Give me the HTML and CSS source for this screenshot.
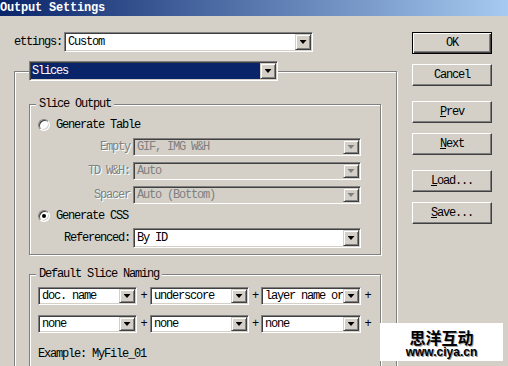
FILE: index.html
```html
<!DOCTYPE html>
<html lang="en">
  <head>
    <meta charset="UTF-8" />
    <title>Output Settings</title>
    <link rel="stylesheet" href="styles.css">
  </head>
  <body>
    <div class="titlebar">Output Settings</div>

    <div class="dialog">
      <div class="main">
        <!-- Settings preset -->
        <div class="settings-row">
          <span class="label">ettings:</span>
          <div class="combo combo-settings">
            <span class="value">Custom</span>
            <span class="drop"><i class="arrow"></i></span>
          </div>
        </div>

        <!-- Page panel, the combo works as its legend -->
        <fieldset class="panel">
          <legend>
            <div class="combo combo-slices">
              <span class="value selected">Slices</span>
              <span class="drop"><i class="arrow"></i></span>
            </div>
          </legend>

          <fieldset class="group group-output">
            <legend>Slice Output</legend>
            <div class="radio-row first"><span class="radio"></span>Generate Table</div>

            <div class="field-row first">
              <span class="field-label disabled">Empty</span>
              <div class="combo combo-wide disabled">
                <span class="value">GIF, IMG W&amp;H</span>
                <span class="drop"><i class="arrow"></i></span>
              </div>
            </div>
            <div class="field-row">
              <span class="field-label disabled">TD W&amp;H:</span>
              <div class="combo combo-wide disabled">
                <span class="value">Auto</span>
                <span class="drop"><i class="arrow"></i></span>
              </div>
            </div>
            <div class="field-row">
              <span class="field-label disabled">Spacer</span>
              <div class="combo combo-wide disabled">
                <span class="value">Auto (Bottom)</span>
                <span class="drop"><i class="arrow"></i></span>
              </div>
            </div>

            <div class="radio-row"><span class="radio checked"></span>Generate CSS</div>

            <div class="field-row ref">
              <span class="field-label">Referenced:</span>
              <div class="combo combo-wide combo-tall">
                <span class="value">By ID</span>
                <span class="drop"><i class="arrow"></i></span>
              </div>
            </div>
          </fieldset>

          <fieldset class="group group-naming">
            <legend>Default Slice Naming</legend>
            <div class="naming-row first">
              <div class="combo name-a"><span class="value">doc. name</span><span class="drop"><i class="arrow"></i></span></div>
              <span class="plus">+</span>
              <div class="combo name-b"><span class="value">underscore</span><span class="drop"><i class="arrow"></i></span></div>
              <span class="plus plus-b">+</span>
              <div class="combo name-c"><span class="value">layer name or</span><span class="drop"><i class="arrow"></i></span></div>
              <span class="plus">+</span>
            </div>
            <div class="naming-row">
              <div class="combo name-a"><span class="value">none</span><span class="drop"><i class="arrow"></i></span></div>
              <span class="plus">+</span>
              <div class="combo name-b"><span class="value">none</span><span class="drop"><i class="arrow"></i></span></div>
              <span class="plus plus-b">+</span>
              <div class="combo name-c"><span class="value">none</span><span class="drop"><i class="arrow"></i></span></div>
              <span class="plus">+</span>
            </div>
            <div class="example">Example: MyFile_01</div>
          </fieldset>
        </fieldset>
      </div>

      <!-- Dialog buttons -->
      <div class="side">
        <button class="btn default">OK</button>
        <button class="btn">Cancel</button>
        <button class="btn wide-gap"><u>P</u>rev</button>
        <button class="btn"><u>N</u>ext</button>
        <button class="btn wide-gap"><u>L</u>oad...</button>
        <button class="btn"><u>S</u>ave...</button>
      </div>
    </div>

    <div class="watermark">
      <div class="wm-cn">思洋互动</div>
      <div class="wm-url">www.ciya.cn</div>
    </div>
  </body>
</html>
```

FILE: styles.css
```css
body {
  margin: 0;
  width: 508px;
  height: 366px;
  overflow: hidden;
  position: relative;
  background-color: #d4d0c8;
  font-family: "Liberation Mono", monospace;
  font-size: 12px;
  letter-spacing: -1.2px;
  color: #000;
}
.titlebar {
  height: 16px;
  line-height: 16px;
  background: linear-gradient(to right, #0a246a, #a6caf0);
  color: #fff;
  font-weight: bold;
  letter-spacing: -0.2px;
  white-space: nowrap;
}
.dialog {
  display: flex;
  height: 334px;
  overflow: hidden;
  padding-top: 16px;
}
.main {
  width: 412px;
}
.side {
  width: 80px;
  display: flex;
  flex-direction: column;
}

/* settings row */
.settings-row {
  display: flex;
  align-items: center;
  height: 20px;
  padding-left: 14px;
}
.settings-row .label {
  width: 48px;
  margin-right: 2px;
}

/* combo boxes */
.combo {
  display: flex;
  box-sizing: border-box;
  height: 18px;
  padding: 1px;
  background-color: #fff;
  border: 1px solid;
  border-color: #808080 #fff #fff #808080;
  box-shadow: inset 1px 1px 0 #404040, inset -1px -1px 0 #d4d0c8;
}
.combo .value {
  flex: 1;
  display: flex;
  align-items: center;
  padding-left: 2px;
  overflow: hidden;
  white-space: nowrap;
}
.combo .value.selected {
  background-color: #0a246a;
  color: #fff;
  padding-left: 1px;
}
.combo .drop {
  flex: none;
  width: 16px;
  box-sizing: border-box;
  display: flex;
  align-items: center;
  justify-content: center;
  background-color: #d4d0c8;
  border: 1px solid;
  border-color: #d4d0c8 #404040 #404040 #d4d0c8;
  box-shadow: inset 1px 1px 0 #fff, inset -1px -1px 0 #808080;
}
.combo .arrow {
  width: 7px;
  height: 4px;
  background-color: #000;
  clip-path: polygon(0 0, 100% 0, 50% 100%);
}
.combo.disabled {
  background-color: #d4d0c8;
  color: #808080;
}
.combo.disabled .arrow {
  background-color: #808080;
}
.combo-settings {
  width: 249px;
  height: 20px;
}
.combo-slices {
  width: 249px;
  height: 20px;
}
.combo-wide {
  width: 228px;
}
.combo-tall {
  height: 20px;
}

/* etched frames */
fieldset {
  margin: 0;
  min-inline-size: 0;
  border: 1px solid #808080;
  box-shadow: inset 1px 1px 0 #fff, 1px 1px 0 #fff;
}
.panel {
  margin: 9px 0 0 14px;
  width: 383px;
  box-sizing: border-box;
  padding: 0 0 30px 14px;
}
.panel > legend {
  padding: 0;
}
.group {
  width: 352px;
  box-sizing: border-box;
  padding: 0 0 6px 6px;
}
.group > legend {
  padding: 0 3px;
  line-height: 12px;
  background-color: #d4d0c8;
}
.group-output {
  margin-top: 17px;
}
.group-naming {
  margin-top: 13px;
  padding-bottom: 20px;
}

/* radios */
.radio-row {
  display: flex;
  align-items: center;
  height: 16px;
  margin-top: 4px;
  padding-left: 2px;
}
.radio-row.first {
  margin-top: 7px;
}
.radio {
  position: relative;
  width: 12px;
  height: 12px;
  box-sizing: border-box;
  margin-right: 6px;
  border-radius: 50%;
  background-color: #fff;
  border: 1px solid;
  border-color: #808080 #fff #fff #808080;
  box-shadow: inset 1px 1px 0 #404040, inset -1px -1px 0 #d4d0c8;
}
.radio.checked::after {
  content: "";
  position: absolute;
  left: 3px;
  top: 3px;
  width: 4px;
  height: 4px;
  border-radius: 50%;
  background-color: #000;
}

/* label + combo rows */
.field-row {
  display: flex;
  align-items: center;
  margin-top: 6px;
}
.field-row.first {
  margin-top: 5px;
}
.field-row.ref {
  margin-top: 4px;
}
.field-label {
  width: 94px;
  margin-right: 3px;
  text-align: right;
}
.field-label.disabled {
  color: #808080;
  text-shadow: 1px 1px 0 #fff;
}

/* naming rows */
.naming-row {
  display: flex;
  align-items: center;
  margin-top: 10px;
  padding-left: 2px;
}
.naming-row.first {
  margin-top: 7px;
}
.name-a,
.name-b {
  width: 99px;
}
.name-c {
  width: 100px;
}
.plus {
  width: 13px;
  text-align: center;
}
.plus-b {
  width: 12px;
}
.example {
  margin-top: 15px;
  padding-left: 2px;
  line-height: 12px;
}

/* buttons */
.btn {
  width: 80px;
  height: 22px;
  margin: 10px 0 0 0;
  padding: 0;
  box-sizing: border-box;
  display: flex;
  align-items: center;
  justify-content: center;
  font: inherit;
  letter-spacing: inherit;
  color: #000;
  background-color: #d4d0c8;
  border: 1px solid;
  border-color: #fff #404040 #404040 #fff;
  box-shadow: inset -1px -1px 0 #808080;
}
.btn.default {
  margin-top: 0;
  border-color: #000;
  box-shadow: inset 1px 1px 0 #fff, inset -1px -1px 0 #404040, inset -2px -2px 0 #808080;
}
.btn.wide-gap {
  margin-top: 15px;
}
.btn u {
  text-underline-offset: 1px;
}

/* site watermark pasted over the corner */
.watermark {
  position: absolute;
  left: 380px;
  top: 323px;
  width: 123px;
  height: 38px;
  background-color: #fff;
  text-align: center;
  letter-spacing: 0;
}
.wm-cn {
  margin-top: 5px;
  height: 18px;
  line-height: 18px;
  font-family: "Noto Sans CJK SC", sans-serif;
  font-size: 16px;
  font-weight: bold;
  text-shadow: 1px 1px 0 #aaa;
}
.wm-url {
  height: 12px;
  line-height: 12px;
  font-family: "Liberation Sans", Arial, sans-serif;
  font-size: 12px;
  font-weight: bold;
  text-shadow: 1px 1px 0 #999;
}
```
